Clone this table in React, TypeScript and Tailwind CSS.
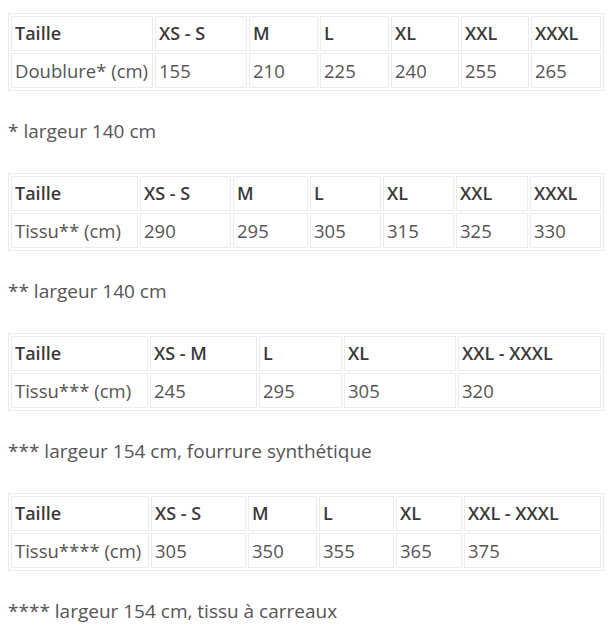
const font = { fontFamily: '"Open Sans", "Liberation Sans", sans-serif' };

type Block = {
  cols: string;
  head: string[];
  row: string[];
  note: string;
};

const blocks: Block[] = [
  {
    cols: "grid-cols-[142px_92px_69px_69px_68px_68px_1fr]",
    head: ["Taille", "XS - S", "M", "L", "XL", "XXL", "XXXL"],
    row: ["Doublure* (cm)", "155", "210", "225", "240", "255", "265"],
    note: "* largeur 140 cm",
  },
  {
    cols: "grid-cols-[127px_91px_75px_71px_71px_72px_1fr]",
    head: ["Taille", "XS - S", "M", "L", "XL", "XXL", "XXXL"],
    row: ["Tissu** (cm)", "290", "295", "305", "315", "325", "330"],
    note: "** largeur 140 cm",
  },
  {
    cols: "grid-cols-[137px_107px_83px_112px_1fr]",
    head: ["Taille", "XS - M", "L", "XL", "XXL - XXXL"],
    row: ["Tissu*** (cm)", "245", "295", "305", "320"],
    note: "*** largeur 154 cm, fourrure synthétique",
  },
  {
    cols: "grid-cols-[138px_95px_69px_75px_66px_1fr]",
    head: ["Taille", "XS - S", "M", "L", "XL", "XXL - XXXL"],
    row: ["Tissu**** (cm)", "305", "350", "355", "365", "375"],
    note: "**** largeur 154 cm, tissu à carreaux",
  },
];

function SizeTable({ b }: { b: Block }) {
  return (
    <div className={`grid ${b.cols} gap-[2px] border border-[#ececec] p-[2px]`}>
      {b.head.map((h, i) => (
        <div
          key={"h" + i}
          className="h-[35px] border border-[#ececec] px-[3px] text-[18px] leading-[33px] font-semibold text-[#3a3a3a] whitespace-nowrap"
        >
          {h}
        </div>
      ))}
      {b.row.map((c, i) => (
        <div
          key={"r" + i}
          className="h-[35px] border border-[#ececec] px-[3px] text-[18.5px] leading-[33px] text-[#555555] whitespace-nowrap"
        >
          {c}
        </div>
      ))}
    </div>
  );
}

export default function App() {
  return (
    <div className="min-h-[630px] w-[612px] bg-white px-2 pt-[13px]" style={font}>
      {blocks.map((b, i) => (
        <div key={i}>
          <SizeTable b={b} />
          <p className="mt-[27px] mb-[28px] text-[19px] leading-[27px] text-[#555555]">{b.note}</p>
        </div>
      ))}
    </div>
  );
}
